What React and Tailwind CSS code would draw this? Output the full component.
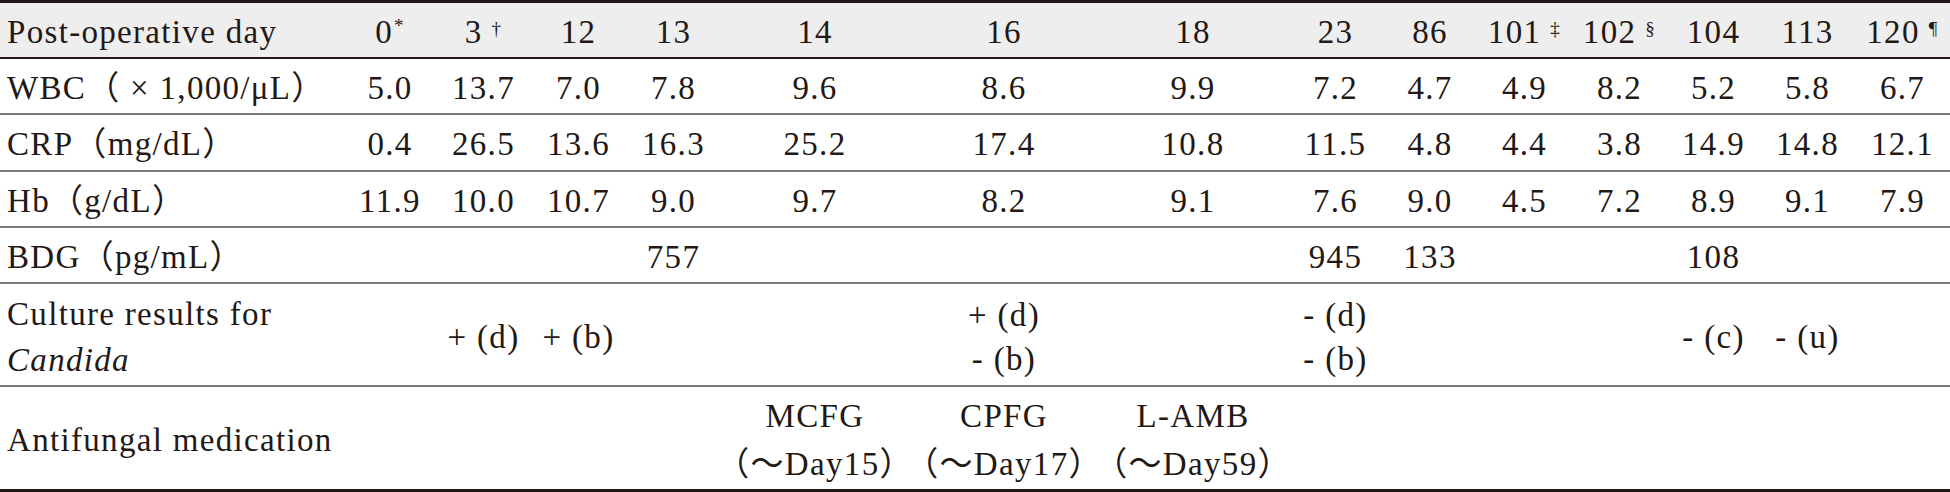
import React from 'react';

// column widths measured off the printed table
const grid =
  'grid grid-cols-[343px_94px_93px_97px_93px_190px_188px_190px_95px_94px_95px_95px_93px_95px_95px]';

const days = [
  { d: '0', mark: '*' },
  { d: '3', mark: '†', gap: true },
  { d: '12' },
  { d: '13' },
  { d: '14' },
  { d: '16' },
  { d: '18' },
  { d: '23' },
  { d: '86' },
  { d: '101', mark: '‡', gap: true },
  { d: '102', mark: '§', gap: true },
  { d: '104' },
  { d: '113' },
  { d: '120', mark: '¶', gap: true },
];

const labs = [
  {
    label: 'WBC（ × 1,000/μL）',
    h: 'h-[56px]',
    values: ['5.0', '13.7', '7.0', '7.8', '9.6', '8.6', '9.9', '7.2', '4.7', '4.9', '8.2', '5.2', '5.8', '6.7'],
  },
  {
    label: 'CRP（mg/dL）',
    h: 'h-[57px]',
    values: ['0.4', '26.5', '13.6', '16.3', '25.2', '17.4', '10.8', '11.5', '4.8', '4.4', '3.8', '14.9', '14.8', '12.1'],
  },
  {
    label: 'Hb（g/dL）',
    h: 'h-[56px]',
    values: ['11.9', '10.0', '10.7', '9.0', '9.7', '8.2', '9.1', '7.6', '9.0', '4.5', '7.2', '8.9', '9.1', '7.9'],
  },
  {
    label: 'BDG（pg/mL）',
    h: 'h-[56px]',
    values: ['', '', '', '757', '', '', '', '945', '133', '', '', '108', '', ''],
  },
];

const culture = [
  [],
  ['+ (d)'],
  ['+ (b)'],
  [],
  [],
  ['+ (d)', '- (b)'],
  [],
  ['- (d)', '- (b)'],
  [],
  [],
  [],
  ['- (c)'],
  ['- (u)'],
  [],
];

const antifungal = [
  [], [], [], [],
  ['MCFG', '（～Day15）'],
  ['CPFG', '（～Day17）'],
  ['L-AMB', '（～Day59）'],
  [], [], [], [], [], [], [],
];

const Cell = ({ children }) => (
  <div className="flex items-center justify-center pt-1 whitespace-nowrap">{children}</div>
);

const Label = ({ children }) => (
  <div className="flex items-center pl-[7px] pt-1 whitespace-nowrap">{children}</div>
);

const Stack = ({ lines, leading }) => (
  <Cell>
    <div className={`flex flex-col items-center ${leading}`}>
      {lines.map((l, i) => (
        <span key={i}>{l}</span>
      ))}
    </div>
  </Cell>
);

export default function App() {
  return (
    <div className="w-[1950px] h-[492px] bg-white text-[#231815] text-[33px] tracking-[0.04em] leading-none font-['Liberation_Serif','Noto_Sans_CJK_JP',serif]">
      {/* header */}
      <div className={`${grid} h-[59px] bg-[#eeeeee] border-t-[3px] border-b-2 border-[#231815]`}>
        <Label>Post-operative day</Label>
        {days.map((c) => (
          <Cell key={c.d}>
            <span>
              {c.d}
              {c.mark && (
                <span
                  className={`relative text-[19px] ${
                    c.mark === '*' ? '-top-[11px] ml-[1px]' : '-top-[8px] ml-[9px]'
                  }`}
                >
                  {c.mark}
                </span>
              )}
            </span>
          </Cell>
        ))}
      </div>

      {labs.map((r) => (
        <div key={r.label} className={`${grid} ${r.h} border-b-2 border-[#7b7b7b]`}>
          <Label>{r.label}</Label>
          {r.values.map((v, i) => (
            <Cell key={i}>{v}</Cell>
          ))}
        </div>
      ))}

      {/* culture */}
      <div className={`${grid} h-[103px] border-b-2 border-[#7b7b7b]`}>
        <div className="flex flex-col justify-center pl-[7px] pt-1 leading-[46px] whitespace-nowrap">
          <span>Culture results for</span>
          <span className="italic">Candida</span>
        </div>
        {culture.map((lines, i) => (
          <Stack key={i} lines={lines} leading="leading-[44px]" />
        ))}
      </div>

      {/* antifungal */}
      <div className={`${grid} h-[105px] border-b-[3px] border-[#231815]`}>
        <Label>Antifungal medication</Label>
        {antifungal.map((lines, i) => (
          <Stack key={i} lines={lines} leading="leading-[48px]" />
        ))}
      </div>
    </div>
  );
}
